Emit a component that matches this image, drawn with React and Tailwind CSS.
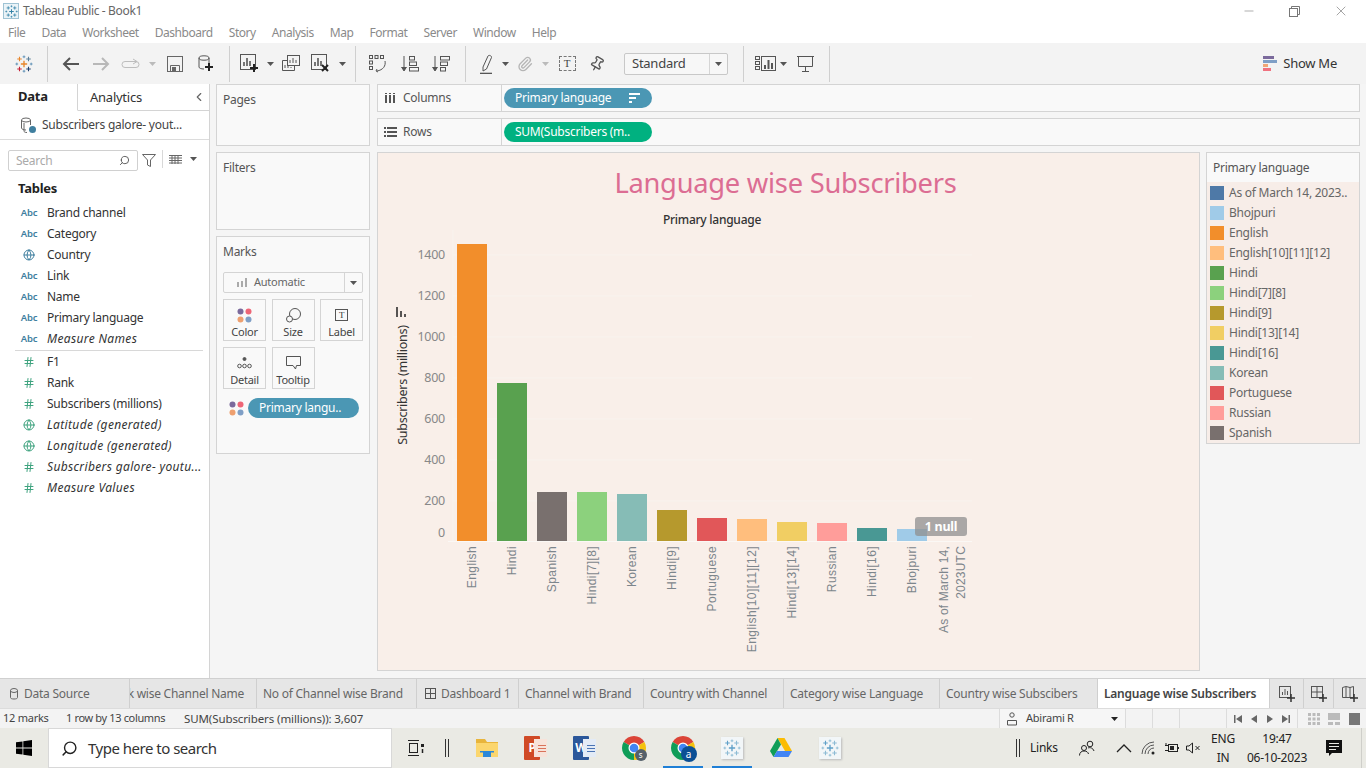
import {
  ChevronLeft,
  Globe,
  Hash,
  Minus,
  Paperclip,
  Pin,
  Search,
  X,
} from "lucide-react";

const menus = ["File", "Data", "Worksheet", "Dashboard", "Story", "Analysis", "Map", "Format", "Server", "Window", "Help"];

const dimensions = [
  ["abc", "Brand channel"],
  ["abc", "Category"],
  ["globe", "Country"],
  ["abc", "Link"],
  ["abc", "Name"],
  ["abc", "Primary language"],
  ["abc", "Measure Names", true],
];

const measures = [
  ["hash", "F1"],
  ["hash", "Rank"],
  ["hash", "Subscribers (millions)"],
  ["greenglobe", "Latitude (generated)", true],
  ["greenglobe", "Longitude (generated)", true],
  ["hash", "Subscribers galore- youtu...", true],
  ["hash", "Measure Values", true],
];

const bars = [
  { name: "English", top: 244, color: "#f28e2b" },
  { name: "Hindi", top: 383, color: "#59a14f" },
  { name: "Spanish", top: 492, color: "#79706e" },
  { name: "Hindi[7][8]", top: 492, color: "#8cd17d" },
  { name: "Korean", top: 494, color: "#86bcb6" },
  { name: "Hindi[9]", top: 510, color: "#b6992d" },
  { name: "Portuguese", top: 518, color: "#e15759" },
  { name: "English[10][11][12]", top: 519, color: "#ffbe7d" },
  { name: "Hindi[13][14]", top: 522, color: "#f1ce63" },
  { name: "Russian", top: 523, color: "#ff9d9a" },
  { name: "Hindi[16]", top: 528, color: "#499894" },
  { name: "Bhojpuri", top: 529, color: "#a0cbe8" },
];

const yTicks = [
  ["1400", 255],
  ["1200", 296],
  ["1000", 337],
  ["800", 378],
  ["600", 419],
  ["400", 460],
  ["200", 501],
  ["0", 533],
];

const legend = [
  ["As of March 14, 2023..", "#4e79a7"],
  ["Bhojpuri", "#a0cbe8"],
  ["English", "#f28e2b"],
  ["English[10][11][12]", "#ffbe7d"],
  ["Hindi", "#59a14f"],
  ["Hindi[7][8]", "#8cd17d"],
  ["Hindi[9]", "#b6992d"],
  ["Hindi[13][14]", "#f1ce63"],
  ["Hindi[16]", "#499894"],
  ["Korean", "#86bcb6"],
  ["Portuguese", "#e15759"],
  ["Russian", "#ff9d9a"],
  ["Spanish", "#79706e"],
];

const tabs = [
  { label: "No of Channel wise Brand", w: "w-[160px]" },
  { label: "Dashboard 1", w: "w-[102px]", grid: true },
  { label: "Channel with Brand", w: "w-[125px]" },
  { label: "Country with Channel", w: "w-[140px]" },
  { label: "Category wise Language", w: "w-[156px]" },
  { label: "Country wise Subscibers", w: "w-[158px]" },
];

// small cross used by the tableau logos
const Cross = ({ x, y, r, color, w = 1 }) => (
  <path d={`M${x - r} ${y}H${x + r}M${x} ${y - r}V${y + r}`} stroke={color} strokeWidth={w} fill="none" />
);

const TableauMark = ({ size = 20, colors }) => {
  const [center, small, topRight, bottomLeft, bottomRight] = colors;
  return (
    <svg width={size} height={size} viewBox="0 0 20 20">
      <Cross x={10} y={10} r={3.5} color={center} w={1.5} />
      <Cross x={10} y={2} r={1.5} color={small} />
      <Cross x={10} y={18} r={1.5} color={small} />
      <Cross x={2} y={10} r={1.5} color={small} />
      <Cross x={18} y={10} r={1.5} color={small} />
      <Cross x={5} y={4.500} r={2.500} color={center} w={1.200} />
      <Cross x={15} y={4.500} r={2.500} color={topRight} w={1.200} />
      <Cross x={5} y={15.500} r={2.500} color={bottomLeft} w={1.200} />
      <Cross x={15} y={15.500} r={2.500} color={bottomRight} w={1.200} />
    </svg>
  );
};

const logoColors = ["#e8862c", "#5b8fb5", "#5c7f99", "#c72037", "#1f3f6e"];
const tileColors = ["#5fa0c8", "#8dbbd4", "#8dbbd4", "#8dbbd4", "#8dbbd4"];
const titleColors = ["#2f7fa5", "#2f7fa5", "#2f7fa5", "#2f7fa5", "#2f7fa5"];

const Caret = ({ color = "#555" }) => (
  <svg width="7" height="4" viewBox="0 0 7 4">
    <path d="M0 0H7L3.5 4Z" fill={color} />
  </svg>
);

const Plus = ({ x, y }) => <path d={`M${x - 4} ${y}H${x + 4}M${x} ${y - 4}V${y + 4}`} stroke="#222" strokeWidth="2" />;

const Sep = () => <div className="h-[36px] w-px bg-[#cfcfcf]" />;

const ToolBox = ({ w, children }) => <div className={`flex h-full items-center justify-center ${w}`}>{children}</div>;

const Toolbar = () => (
  <div className="flex h-[41px] items-center bg-[#f3f3f3]">
    <ToolBox w="w-[47px]">
      <TableauMark size={18} colors={logoColors} />
    </ToolBox>
    <Sep />
    <div className="flex h-full items-center pl-[7px]">
      <ToolBox w="w-[31px]">
        <svg width="17" height="14" viewBox="0 0 17 14" fill="none" stroke="#555" strokeWidth="2">
          <path d="M17 7H2M8 1L2 7l6 6" />
        </svg>
      </ToolBox>
      <ToolBox w="w-[31px]">
        <svg width="17" height="14" viewBox="0 0 17 14" fill="none" stroke="#b8b8b8" strokeWidth="2">
          <path d="M0 7H15M9 1l6 6-6 6" />
        </svg>
      </ToolBox>
      <ToolBox w="w-[28px]">
        <svg width="20" height="12" viewBox="0 0 20 12" fill="none" stroke="#bdbdbd">
          <rect x="1" y="3.5" width="17" height="6" rx="3" />
          <path d="M12 1l4 2.5-4 2.5" />
        </svg>
      </ToolBox>
      <ToolBox w="w-[14px]">
        <Caret color="#bbb" />
      </ToolBox>
      <ToolBox w="w-[31px]">
        <svg width="16" height="16" viewBox="0 0 16 16" fill="none" stroke="#666">
          <rect x="0.5" y="0.5" width="15" height="15" />
          <path d="M3.500 15.500V9.500H12.500V15.500" />
          <rect x="5" y="11" width="4" height="4" fill="#666" stroke="none" />
        </svg>
      </ToolBox>
      <ToolBox w="w-[31px]">
        <svg width="16" height="17" viewBox="0 0 16 17" fill="none" stroke="#555">
          <ellipse cx="6" cy="3" rx="5" ry="2.2" />
          <path d="M1 3v9c0 1.2 2 2 5 2M11 3v6" />
          <Plus x={11} y={12} />
        </svg>
      </ToolBox>
    </div>
    <div className="ml-[8px]">
      <Sep />
    </div>
    <div className="flex h-full items-center pl-[6px]">
      <ToolBox w="w-[28px]">
        <svg width="20" height="19" viewBox="0 0 20 19" fill="none">
          <rect x="0.5" y="0.5" width="15" height="15" stroke="#555" />
          <path d="M4 12V8M7 12V4M10 12V7" stroke="#555" strokeWidth="1.6" />
          <Plus x={14} y={14} />
        </svg>
      </ToolBox>
      <ToolBox w="w-[12px]">
        <Caret />
      </ToolBox>
      <ToolBox w="w-[30px]">
        <svg width="18" height="17" viewBox="0 0 18 17" fill="none" stroke="#555">
          <rect x="5.5" y="0.5" width="12" height="10" fill="#f3f3f3" />
          <path d="M8 8V5M11 8V3M14 8V5" />
          <path d="M5.5 5.5H0.5V15.5H12.5V10.5M3 13v-3M6 13v-2M9 13v-1" />
        </svg>
      </ToolBox>
      <ToolBox w="w-[30px]">
        <svg width="20" height="19" viewBox="0 0 20 19" fill="none">
          <rect x="0.5" y="0.5" width="15" height="15" stroke="#555" />
          <path d="M4 12V8M7 12V4M10 12V7" stroke="#555" strokeWidth="1.6" />
          <path d="M11 11l6 6M17 11l-6 6" stroke="#222" strokeWidth="2" />
        </svg>
      </ToolBox>
      <ToolBox w="w-[12px]">
        <Caret />
      </ToolBox>
    </div>
    <div className="ml-[7px]">
      <Sep />
    </div>
    <div className="flex h-full items-center pl-[6px]">
      <ToolBox w="w-[32px]">
        <svg width="18" height="18" viewBox="0 0 18 18" fill="none" stroke="#555">
          <rect x="0.5" y="0.5" width="3" height="3" />
          <rect x="6" y="0.5" width="3" height="3" />
          <rect x="11.5" y="0.5" width="3" height="3" />
          <rect x="0.5" y="6" width="3" height="3" />
          <rect x="0.5" y="11.5" width="3" height="3" />
          <path d="M16 6c1 5-2 9-8 10M8 14l-1 2 2 1" />
        </svg>
      </ToolBox>
      <ToolBox w="w-[32px]">
        <svg width="18" height="16" viewBox="0 0 18 16" fill="none" stroke="#555">
          <path d="M3 0v14M0.5 11L3 15l2.5-4" fill="#555" />
          <rect x="8.5" y="0.5" width="5" height="3.5" />
          <rect x="8.5" y="6" width="7" height="3.5" />
          <rect x="8.5" y="11.5" width="9" height="3.5" />
        </svg>
      </ToolBox>
      <ToolBox w="w-[30px]">
        <svg width="18" height="16" viewBox="0 0 18 16" fill="none" stroke="#555">
          <path d="M3 0v14M0.5 11L3 15l2.5-4" fill="#555" />
          <rect x="8.5" y="0.5" width="9" height="3.5" />
          <rect x="8.5" y="6" width="7" height="3.5" />
          <rect x="8.5" y="11.5" width="5" height="3.5" />
        </svg>
      </ToolBox>
    </div>
    <div className="ml-[9px]">
      <Sep />
    </div>
    <div className="flex h-full items-center pl-[7px]">
      <ToolBox w="w-[28px]">
        <svg width="14" height="20" viewBox="0 0 14 20" fill="none" stroke="#555">
          <path d="M3 13L8 2c1-1.500 4 0 3.500 1.500L6.500 15 3 17z" />
          <path d="M0 19.500H12" strokeWidth="1.600" />
        </svg>
      </ToolBox>
      <ToolBox w="w-[8px]">
        <Caret />
      </ToolBox>
      <ToolBox w="w-[32px]">
        <Paperclip size={16} color="#b5b5b5" />
      </ToolBox>
      <ToolBox w="w-[8px]">
        <Caret color="#bbb" />
      </ToolBox>
      <div className="w-[3px]" />
      <ToolBox w="w-[30px]">
        <div className="flex h-[15px] w-[17px] items-center justify-center border border-dashed border-[#777] font-['Liberation_Serif',serif] text-[11px] leading-none text-[#444]">
          T
        </div>
      </ToolBox>
      <ToolBox w="w-[30px]">
        <Pin size={16} color="#555" className="rotate-[30deg]" />
      </ToolBox>
    </div>
    <div className="ml-[12px] flex h-[22px] w-[104px] items-center rounded-[2px] border border-[#c8c8c8] bg-[#f7f7f7]">
      <span className="flex-1 pl-[7px] text-[13px] text-[#444]">Standard</span>
      <span className="flex h-full w-[18px] items-center justify-center border-l border-[#d5d5d5]">
        <Caret />
      </span>
    </div>
    <div className="ml-[15px]">
      <Sep />
    </div>
    <div className="flex h-full items-center pl-[7px]">
      <ToolBox w="w-[28px]">
        <svg width="21" height="15" viewBox="0 0 21 15" fill="none" stroke="#555">
          <rect x="0.500" y="0.500" width="4" height="3" />
          <rect x="0.500" y="5.500" width="4" height="3" />
          <rect x="0.500" y="10.500" width="4" height="3" />
          <rect x="6.500" y="0.500" width="14" height="14" />
          <path d="M10 13V9M13.500 13V4M17 13V7" strokeWidth="2" />
        </svg>
      </ToolBox>
      <ToolBox w="w-[8px]">
        <Caret />
      </ToolBox>
      <div className="w-[3px]" />
      <ToolBox w="w-[30px]">
        <svg width="17" height="16" viewBox="0 0 17 16" fill="none" stroke="#555">
          <path d="M0 0.500H17M1.500 1V10.500H15.500V1M8.500 11V15M5 15.500H12" />
        </svg>
      </ToolBox>
    </div>
    <div className="ml-[9px]">
      <Sep />
    </div>
    <div className="ml-auto flex items-center gap-[6px] pr-[29px]">
      <svg width="14" height="15" viewBox="0 0 14 15">
        <rect x="0" y="0" width="11" height="3" fill="#7b6a9c" />
        <rect x="0" y="4" width="14" height="3" fill="#7f9fc6" />
        <rect x="0" y="8" width="5" height="3" fill="#f0a676" />
        <rect x="0" y="12" width="8" height="3" fill="#f0727f" />
      </svg>
      <span className="text-[13px] text-[#333]">Show Me</span>
    </div>
  </div>
);

const FieldIcon = ({ type }) => {
  if (type === "abc") return <span className="text-[9.5px] font-semibold leading-none text-[#3f7f9f]">Abc</span>;
  if (type === "globe") return <Globe size={12} color="#3f7f9f" />;
  if (type === "greenglobe") return <Globe size={12} color="#3fa37f" />;
  return <Hash size={12} color="#3fa37f" />;
};

const FieldRow = ({ field }) => (
  <div className="flex h-[21px] items-center">
    <div className="flex w-[47px] justify-center pl-[14px] pr-[3px]">
      <FieldIcon type={field[0]} />
    </div>
    <span className={`whitespace-nowrap text-[12px] text-[#333] ${field[2] ? "italic tracking-[0.35px]" : ""}`}>{field[1]}</span>
  </div>
);

const DataPane = () => (
  <div className="w-[210px] shrink-0 border-r border-[#d4d4d4] bg-white">
    <div className="flex h-[27px] items-center border-b border-[#d4d4d4]">
      <div className="flex h-[27px] w-[78px] items-center border-r border-b border-[#d4d4d4] border-b-white pl-[18px] pt-[1px] text-[13px] font-bold text-[#222]">
        Data
      </div>
      <span className="flex-1 pl-[12px] pt-[1px] text-[13px] text-[#333]">Analytics</span>
      <ChevronLeft size={14} color="#666" className="mr-[3px]" />
    </div>
    <div className="flex h-[29px] items-center gap-[5px] border-b border-[#dcdcdc] pl-[20px]">
      <svg width="17" height="17" viewBox="0 0 17 17" fill="none" stroke="#666">
        <ellipse cx="6" cy="3" rx="4.500" ry="2" />
        <path d="M1.500 3v8c0 1 2 2 4.500 2M10.500 3v5M4 6v8c0 1 1 1.500 3 1.500" />
        <circle cx="12.500" cy="12.500" r="3.500" fill="#3f7f9f" stroke="none" />
      </svg>
      <span className="whitespace-nowrap text-[12px] text-[#444]">Subscribers galore- yout...</span>
    </div>
    <div className="flex h-[37px] items-start pt-[10px]">
      <div className="ml-[8px] flex h-[21px] w-[130px] items-center justify-between rounded-[2px] border border-[#d0d0d0] px-[7px]">
        <span className="text-[12px] text-[#aaa]">Search</span>
        <Search size={11} color="#555" className="-scale-x-100" />
      </div>
      <svg width="14" height="13" viewBox="0 0 14 13" fill="none" stroke="#666" className="ml-[4px] mt-[4px]">
        <path d="M0.500 0.500H13.500L8.500 6V12.500L5.500 11V6Z" />
      </svg>
      <div className="ml-[6px] h-[18px] w-px bg-[#d8d8d8]" />
      <svg width="13" height="9" viewBox="0 0 13 9" className="ml-[6px] mt-[5px]" fill="none" stroke="#666">
        <path d="M0 0.500H13M0 3H13M0 5.500H13M0 8H13M3 0V9M6 0V9M9 0V9" />
      </svg>
      <div className="ml-[8px] mt-[7px]">
        <Caret />
      </div>
    </div>
    <div className="flex h-[23px] items-center pl-[18px] text-[13px] font-bold text-[#222]">Tables</div>
    <div className="pt-[2px]">
      {dimensions.map((f) => (
        <FieldRow key={f[1]} field={f} />
      ))}
    </div>
    <div className="ml-[15px] mr-[6px] mt-[1px] h-px bg-[#d8d8d8]" />
    <div>
      {measures.map((f) => (
        <FieldRow key={f[1]} field={f} />
      ))}
    </div>
  </div>
);

const MarkButton = ({ label, children }) => (
  <div className="flex h-[42px] w-[43px] flex-col items-center border border-[#d4d4d4] pt-[6px]">
    <div className="flex h-[18px] items-center">{children}</div>
    <span className="whitespace-nowrap text-[11px] leading-[15px] text-[#444]">{label}</span>
  </div>
);

const Dots = () => (
  <svg width="15" height="15" viewBox="0 0 15 15">
    <circle cx="3.500" cy="3.500" r="3" fill="#7b6a9c" />
    <circle cx="11.500" cy="3.500" r="3" fill="#ee6677" />
    <circle cx="3.500" cy="11.500" r="3" fill="#eea070" />
    <circle cx="11.500" cy="11.500" r="3" fill="#7f9fc6" />
  </svg>
);

const ShelfColumn = () => (
  <div className="flex w-[154px] shrink-0 flex-col gap-[6px]">
    <div className="h-[62px] border border-[#d4d4d4] bg-[#f9f9f9] pl-[6px] pt-[6px] text-[12px] text-[#555]">Pages</div>
    <div className="h-[78px] border border-[#d4d4d4] bg-[#f9f9f9] pl-[6px] pt-[6px] text-[12px] text-[#555]">Filters</div>
    <div className="h-[218px] border border-[#d4d4d4] bg-[#f9f9f9] px-[6px] pt-[6px]">
      <div className="text-[12px] leading-[17px] text-[#555]">Marks</div>
      <div className="mt-[12px] flex h-[21px] w-[140px] items-center rounded-[2px] border border-[#d4d4d4]">
        <svg width="11" height="9" viewBox="0 0 11 9" className="ml-[12px]">
          <path d="M1 9V4h2v5zM5 9V3h2v6zM9 9V0h2v9z" fill="#aaa" />
        </svg>
        <span className="ml-[7px] flex-1 text-[11px] text-[#666]">Automatic</span>
        <span className="flex h-full w-[18px] items-center justify-center border-l border-[#d5d5d5]">
          <Caret />
        </span>
      </div>
      <div className="mt-[6px] grid w-[140px] grid-cols-[43px_43px_43px] justify-between gap-y-[6px]">
        <MarkButton label="Color">
          <Dots />
        </MarkButton>
        <MarkButton label="Size">
          <svg width="15" height="15" viewBox="0 0 15 15" fill="none" stroke="#555">
            <circle cx="9" cy="6" r="5.500" />
            <circle cx="3.500" cy="11" r="3" fill="#f9f9f9" />
          </svg>
        </MarkButton>
        <MarkButton label="Label">
          <div className="flex h-[12px] w-[13px] items-center justify-center border border-[#555] font-['Liberation_Serif',serif] text-[9px] leading-none text-[#333]">
            T
          </div>
        </MarkButton>
        <MarkButton label="Detail">
          <svg width="15" height="12" viewBox="0 0 15 12" fill="none" stroke="#555">
            <circle cx="7.500" cy="2" r="1.500" fill="#555" />
            <circle cx="2.500" cy="9" r="1.800" />
            <circle cx="7.500" cy="9" r="1.800" />
            <circle cx="12.500" cy="9" r="1.800" />
          </svg>
        </MarkButton>
        <MarkButton label="Tooltip">
          <svg width="15" height="14" viewBox="0 0 15 14" fill="none" stroke="#555">
            <path d="M0.500 0.500H14.500V9.500H10.500L9.500 13 7 9.500H0.500Z" />
          </svg>
        </MarkButton>
      </div>
      <div className="mt-[9px] flex items-center gap-[4px] pl-[6px]">
        <Dots />
        <div className="flex h-[20px] w-[111px] items-center rounded-full bg-[#4b97b4] pl-[11px] text-[12px] text-white">
          Primary langu..
        </div>
      </div>
    </div>
  </div>
);

const ShelfRow = ({ icon, label, pill, color, sorted }) => (
  <div className="flex h-[28px] items-center border border-[#d4d4d4] bg-[#f9f9f9]">
    <div className="flex h-full w-[124px] items-center gap-[6px] border-r border-[#d4d4d4] pl-[6px] text-[12px] text-[#555]">
      <span className="flex w-[13px] justify-center">{icon}</span>
      {label}
    </div>
    <div
      className={`ml-[2px] flex h-[20px] w-[148px] items-center justify-between rounded-full pl-[11px] pr-[12px] text-[12px] text-white ${color}`}
    >
      <span className="whitespace-nowrap">{pill}</span>
      {sorted && (
        <svg width="11" height="10" viewBox="0 0 11 10" fill="#fff">
          <rect width="11" height="2" />
          <rect y="4" width="7" height="2" />
          <rect y="8" width="3" height="2" />
        </svg>
      )}
    </div>
  </div>
);

const Chart = () => (
  <svg viewBox="378 212 820 457" width="820" height="457" className="block">
    <text x="712" y="224" textAnchor="middle" fontSize="12" fontWeight="500" fill="#333">
      Primary language
    </text>
    {[255, 296, 337, 378, 419, 460, 501].map((y) => (
      <path key={y} d={`M453 ${y}H972`} stroke="#f8f3ee" />
    ))}
    <path d="M453 230V541" stroke="#f8f3ee" />
    <path d="M448 541.500H972" stroke="#fbf8f5" />
    {yTicks.map(([label, y]) => (
      <text key={label} x="445" y={y + 4} textAnchor="end" fontSize="12.500" fill="#888">
        {label}
      </text>
    ))}
    <text
      x="402"
      y="385"
      textAnchor="middle"
      dominantBaseline="central"
      fontSize="12.500"
      fill="#333"
      transform="rotate(-90 402 385)"
    >
      Subscribers (millions)
    </text>
    <path d="M397 307V317M401 311V317M405 314V317" stroke="#222" strokeWidth="1.500" />
    {bars.map((b, i) => {
      const x = 457 + i * 40;
      return (
        <g key={b.name}>
          <rect x={x} y={b.top} width="30" height={541 - b.top} fill={b.color} />
          <text
            x={x + 15}
            y="546"
            textAnchor="end"
            dominantBaseline="central"
            fontSize="12"
            fontFamily="Liberation Sans"
            letterSpacing="0.4"
            fill="#7d868c"
            transform={`rotate(-90 ${x + 15} 546)`}
          >
            {b.name}
          </text>
        </g>
      );
    })}
    <g fontSize="12" fontFamily="Liberation Sans" letterSpacing="0.2" fill="#7d868c">
      <text x="944" y="546" textAnchor="end" dominantBaseline="central" transform="rotate(-90 944 546)">
        As of March 14,
      </text>
      <text x="961" y="546" textAnchor="end" dominantBaseline="central" transform="rotate(-90 961 546)">
        2023UTC
      </text>
    </g>
    <rect x="915" y="517" width="52" height="19" rx="3" fill="#8f8f8f" fillOpacity="0.75" />
    <text x="941" y="531" textAnchor="middle" fontSize="12.500" fontWeight="700" fill="#fff">
      1 null
    </text>
  </svg>
);

const Workspace = () => (
  <div className="flex min-w-0 flex-1 flex-col gap-[6px]">
    <ShelfRow
      label="Columns"
      pill="Primary language"
      color="bg-[#4b97b4]"
      sorted
      icon={
        <svg width="11" height="10" viewBox="0 0 11 10" fill="#555">
          <rect y="2" width="2" height="8" />
          <rect x="4" y="2" width="2" height="8" />
          <rect x="8" y="2" width="2" height="8" />
          <rect width="2" height="1" />
          <rect x="4" width="2" height="1" />
          <rect x="8" width="2" height="1" />
        </svg>
      }
    />
    <ShelfRow
      label="Rows"
      pill="SUM(Subscribers (m.."
      color="bg-[#00b180]"
      icon={
        <svg width="13" height="10" viewBox="0 0 13 10" fill="#555">
          <rect width="2" height="2" />
          <rect x="3" width="10" height="2" />
          <rect y="4" width="2" height="2" />
          <rect x="3" y="4" width="10" height="2" />
          <rect y="8" width="2" height="2" />
          <rect x="3" y="8" width="10" height="2" />
        </svg>
      }
    />
    <div className="flex gap-[6px]">
      <div className="h-[519px] w-[823px] border border-[#d4d4d4] bg-[#f9efe9]">
        <div className="flex h-[59px] items-center justify-center pr-[6px] text-[27.3px] leading-none text-[#dc6d93]">
          Language wise Subscribers
        </div>
        <Chart />
      </div>
      <div className="h-[292px] w-[154px] border border-[#d4d4d4] bg-[#f7ede8]">
        <div className="flex h-[29px] items-center bg-[#f9f9f9] pl-[6px] text-[12px] text-[#555]">Primary language</div>
        <div className="pl-[3px] pt-[1px]">
          {legend.map(([name, color]) => (
            <div key={name} className="flex h-[20px] items-center gap-[5px]">
              <span className="h-[14px] w-[14px] shrink-0" style={{ backgroundColor: color }} />
              <span className="whitespace-nowrap text-[12px] text-[#666]">{name}</span>
            </div>
          ))}
        </div>
      </div>
    </div>
  </div>
);

const Tab = ({ w, children }) => (
  <div className={`flex h-full shrink-0 items-center border-r border-[#cfcfcf] ${w}`}>{children}</div>
);

const TabBar = () => (
  <div className="flex h-[30px] border-t border-[#d0d0d0] bg-[#e6e6e6] text-[12px] text-[#666]">
    <Tab w="w-[130px]">
      <svg width="10" height="12" viewBox="0 0 10 12" fill="none" stroke="#666" className="ml-[9px] mr-[5px]">
        <ellipse cx="5" cy="2.500" rx="3.500" ry="2" />
        <path d="M1.500 2.500V9.500c0 1 1.500 1.500 3.500 1.500s3.500-.5 3.500-1.500V2.500" />
      </svg>
      Data Source
    </Tab>
    <Tab w="w-[127px]">
      <div className="flex w-full justify-end overflow-hidden pr-[12px]">
        <span className="whitespace-nowrap">Rank wise Channel Name</span>
      </div>
    </Tab>
    {tabs.map((t) => (
      <Tab key={t.label} w={t.w}>
        <div className={`flex w-full items-center gap-[5px] whitespace-nowrap ${t.grid ? "pl-[8px]" : "pl-[6px]"}`}>
          {t.grid && (
            <svg width="11" height="11" viewBox="0 0 11 11" fill="none" stroke="#555">
              <rect x="0.500" y="0.500" width="10" height="10" />
              <path d="M5.500 0V11M0 5.500H11" />
            </svg>
          )}
          {t.label}
        </div>
      </Tab>
    ))}
    <div className="flex h-full w-[171px] shrink-0 items-center bg-white pl-[6px] font-semibold text-[#444]">
      Language wise Subscribers
    </div>
    <div className="flex h-full w-[35px] items-center justify-center border-x border-[#cfcfcf]">
      <svg width="16" height="16" viewBox="0 0 16 16" fill="none" stroke="#555">
        <rect x="0.500" y="0.500" width="11" height="11" />
        <path d="M3.500 9V6M6 9V3M8.500 9V5" />
        <path d="M12 8V16M8 12H16" stroke="#333" strokeWidth="1.500" />
      </svg>
    </div>
    <div className="flex h-full w-[30px] items-center justify-center border-r border-[#cfcfcf]">
      <svg width="16" height="16" viewBox="0 0 16 16" fill="none" stroke="#555">
        <rect x="0.500" y="0.500" width="11" height="11" />
        <path d="M6 0V12M0 6H12" />
        <path d="M12 8V16M8 12H16" stroke="#333" strokeWidth="1.500" />
      </svg>
    </div>
    <div className="flex h-full flex-1 items-center justify-center">
      <svg width="16" height="16" viewBox="0 0 16 16" fill="none" stroke="#555">
        <path d="M0.500 1.500L4 0.500 8 1.500 11.500 0.500V11.500H0.500ZM4 1V11M8 1V11" />
        <path d="M12 8V16M8 12H16" stroke="#333" strokeWidth="1.500" />
      </svg>
    </div>
  </div>
);

const NavButton = ({ d }) => (
  <div className="flex w-[16px] justify-center">
    <svg width="8" height="8" viewBox="0 0 8 8" fill="#666">
      <path d={d} />
    </svg>
  </div>
);

const StatusBar = () => (
  <div className="flex h-[20px] items-center border-t border-[#dcdcdc] bg-[#f3f3f3] text-[11px] text-[#444]">
    <span className="w-[66px] pl-[3px]">12 marks</span>
    <span className="w-[118px] tracking-[-0.35px]">1 row by 13 columns</span>
    <span className="w-[815px] text-[11.5px] tracking-[-0.1px]">SUM(Subscribers (millions)): 3,607</span>
    <div className="flex h-full w-[127px] items-center border-x border-[#dcdcdc] bg-[#f6f6f6]">
      <svg width="10" height="14" viewBox="0 0 10 14" fill="none" stroke="#555" className="ml-[7px] mr-[9px]">
        <circle cx="5" cy="3" r="2.200" />
        <path d="M0.500 13V8.500H9.500V13Z" />
      </svg>
      <span className="flex-1">Abirami R</span>
      <span className="mr-[7px] flex">
        <Caret color="#222" />
      </span>
    </div>
    <div className="h-full w-[27px] border-r border-[#dcdcdc]" />
    <div className="h-full w-[27px] border-r border-[#dcdcdc]" />
    <div className="h-full w-[47px] border-r border-[#dcdcdc]" />
    <div className="flex h-full w-[71px] items-center justify-center border-r border-[#dcdcdc]">
      <NavButton d="M0 0h1.500v8H0zM8 0v8L2 4z" />
      <NavButton d="M7 0v8L1 4z" />
      <NavButton d="M1 0v8l6-4z" />
      <NavButton d="M8 0H6.500v8H8zM0 0v8l6-4z" />
    </div>
    <div className="flex flex-1 items-center justify-around pl-[6px] pr-[2px]">
      <svg width="12" height="12" viewBox="0 0 12 12" fill="#bbb">
        <path d="M0 0h3v3H0zM4.500 0h3v3h-3zM9 0h3v3H9zM0 4.500h3v3H0zM4.500 4.500h3v3h-3zM9 4.500h3v3H9zM0 9h3v3H0zM4.500 9h3v3h-3zM9 9h3v3H9z" />
      </svg>
      <svg width="12" height="12" viewBox="0 0 12 12" fill="#bbb">
        <path d="M0 0h12v7H0zM0 9h5v3H0zM7 9h5v3H7z" />
      </svg>
      <div className="h-[12px] w-[11px] bg-[#777]" />
    </div>
  </div>
);

const Chrome = ({ badge, badgeSize }) => (
  <div className="relative h-[24px] w-[24px]">
    <svg width="24" height="24" viewBox="0 0 24 24">
      <path d="M12 12L1.610 6A12 12 0 0 1 22.390 6Z" fill="#db4437" />
      <path d="M12 12L22.390 6A12 12 0 0 1 12 24Z" fill="#f4c20d" />
      <path d="M12 12L12 24A12 12 0 0 1 1.610 6Z" fill="#0f9d58" />
      <circle cx="12" cy="12" r="5.500" fill="#fff" />
      <circle cx="12" cy="12" r="4.300" fill="#4285f4" />
    </svg>
    <div
      className={`absolute flex items-center justify-center rounded-full leading-none text-white ${badgeSize}`}
    >
      {badge}
    </div>
  </div>
);

const TaskTableau = () => (
  <div className="flex h-[22px] w-[22px] items-center justify-center bg-[#f2f6f8] shadow-[1px_1px_2px_#bbb]">
    <TableauMark size={18} colors={tileColors} />
  </div>
);

const OfficeIcon = ({ letter, main, paper, line }) => (
  <div className="relative h-[24px] w-[23px]">
    <div className={`absolute right-0 top-[3px] flex h-[18px] w-[13px] flex-col justify-center gap-[2px] pl-[4px] pr-[1px] ${paper}`}>
      <div className={`h-[1px] ${line}`} />
      <div className={`h-[1px] ${line}`} />
      <div className={`h-[1px] ${line}`} />
    </div>
    <div className={`flex h-[24px] w-[16px] items-center justify-center rounded-[1px] text-[12px] font-bold leading-none text-white ${main}`}>
      {letter}
    </div>
  </div>
);

const TaskSlot = ({ w, children }) => <div className={`flex h-full items-center justify-center ${w}`}>{children}</div>;

const Taskbar = () => (
  <div className="flex h-[40px] items-center bg-[#eaeae4] text-black">
    <TaskSlot w="w-[48px]">
      <svg width="16" height="16" viewBox="0 0 16 16" fill="#000">
        <path d="M0 2.300L6.500 1.400V7.600H0zM7.300 1.300L16 0V7.600H7.300zM0 8.400H6.500V14.600L0 13.700zM7.300 8.400H16V16L7.300 14.700z" />
      </svg>
    </TaskSlot>
    <div className="flex h-full w-[344px] items-center border border-[#d8d8d8] bg-white pl-[12px]">
      <Search size={17} color="#222" className="-scale-x-100" />
      <span className="ml-[10px] text-[15px] tracking-[-0.5px] text-[#333]">Type here to search</span>
    </div>
    <TaskSlot w="w-[48px]">
      <svg width="16" height="16" viewBox="0 0 16 16" fill="none" stroke="#222">
        <path d="M0 0.500H11M0 15.500H11" />
        <rect x="1.500" y="3.500" width="8" height="9" />
        <rect x="13" y="4" width="3" height="3" fill="#222" stroke="none" />
        <path d="M14.500 9V13" strokeWidth="1.500" />
      </svg>
    </TaskSlot>
    <TaskSlot w="w-[14px]">
      <div className="h-[18px] w-[4px] border-x border-[#333]" />
    </TaskSlot>
    <div className="w-[8px]" />
    <TaskSlot w="w-[49px]">
      <svg width="22" height="20" viewBox="0 0 22 20">
        <path d="M0 1H9L11 4H22V19H0Z" fill="#e8b53c" />
        <rect y="5" width="22" height="14" fill="#fbd66e" />
        <path d="M4 13H18V14.500H15V19H7V14.500H4Z" fill="#2b88d8" />
      </svg>
    </TaskSlot>
    <TaskSlot w="w-[49px]">
      <OfficeIcon letter="P" main="bg-[#d04a26]" paper="bg-[#f7e3da]" line="bg-[#d9735a]" />
    </TaskSlot>
    <TaskSlot w="w-[49px]">
      <OfficeIcon letter="W" main="bg-[#2b579a]" paper="bg-[#e3ebf6]" line="bg-[#4a74b4]" />
    </TaskSlot>
    <TaskSlot w="w-[49px]">
      <Chrome badge="s" badgeSize="-bottom-[1px] -right-[1px] h-[12px] w-[12px] bg-[#55606a] text-[8px]" />
    </TaskSlot>
    <div className="relative h-full w-[49px]">
      <div className="flex h-full items-center justify-center">
        <Chrome badge="a" badgeSize="-bottom-[2px] -right-[2px] h-[16px] w-[16px] bg-[#0b4f94] text-[10px]" />
      </div>
      <div className="absolute bottom-0 left-[5px] h-[2px] w-[40px] bg-[#1f7fd6]" />
    </div>
    <div className="relative h-full w-[49px]">
      <div className="flex h-full items-center justify-center">
        <TaskTableau />
      </div>
      <div className="absolute bottom-0 left-[5px] h-[2px] w-[40px] bg-[#1f7fd6]" />
    </div>
    <TaskSlot w="w-[49px]">
      <svg width="22" height="20" viewBox="0 0 22 20">
        <path d="M7.500 0H14.500L22 13H15Z" fill="#fbbc04" />
        <path d="M7.500 0L0 13 3.500 19 11 6.500Z" fill="#0f9d58" />
        <path d="M3.500 19H18.500L22 13H7Z" fill="#4285f4" />
      </svg>
    </TaskSlot>
    <TaskSlot w="w-[49px]">
      <TaskTableau />
    </TaskSlot>
    <div className="ml-auto flex h-full items-center">
      <div className="h-[18px] w-[4px] border-x border-[#333]" />
      <span className="ml-[10px] w-[49px] text-[12px] text-[#222]">Links</span>
      <svg width="16" height="16" viewBox="0 0 16 16" fill="none" stroke="#222" className="mr-[21px]">
        <circle cx="11" cy="4" r="2.800" />
        <circle cx="5" cy="8" r="2.500" />
        <path d="M0.500 15.500c0-3 2-4.500 4.500-4.500s4 1 4.500 3M9 8c2-1 5 0 6 3" />
      </svg>
      <svg width="16" height="9" viewBox="0 0 16 9" fill="none" stroke="#222" strokeWidth="1.300" className="mr-[9px]">
        <path d="M1 8L8 1l7 7" />
      </svg>
      <svg width="14" height="14" viewBox="0 0 14 14" fill="none" stroke="#555" className="mr-[9px]">
        <path d="M1 13A12 12 0 0 1 13 1M4 13A9 9 0 0 1 13 4M7 13A6 6 0 0 1 13 7" />
        <circle cx="12" cy="12" r="1.500" fill="#222" stroke="none" />
      </svg>
      <svg width="15" height="12" viewBox="0 0 15 12" fill="none" stroke="#222" className="mr-[7px]">
        <rect x="4.500" y="2.500" width="9" height="7" />
        <rect x="6" y="4" width="4" height="4" fill="#222" stroke="none" />
        <path d="M14.500 5V7M1 3.500H4.500M1 8.500H4.500M2 1V3" />
      </svg>
      <svg width="15" height="12" viewBox="0 0 15 12" fill="none" stroke="#222" className="mr-[7px]">
        <path d="M0.500 4V8H3L6.500 11V1L3 4Z" />
        <path d="M9.500 4l4 4M13.500 4l-4 4" />
      </svg>
      <div className="flex w-[30px] flex-col items-center text-[12px] leading-[19px] text-[#222]">
        <span>ENG</span>
        <span>IN</span>
      </div>
      <div className="flex w-[78px] flex-col items-center text-[12px] leading-[19px] text-[#222]">
        <span>19:47</span>
        <span>06-10-2023</span>
      </div>
      <div className="ml-[10px] mr-[19px] flex w-[16px] justify-center">
        <svg width="16" height="17" viewBox="0 0 16 17">
          <path d="M0 0H16V13H6L3 16V13H0Z" fill="#111" />
          <path d="M3 3.500H13M3 6.500H13M3 9.500H10" stroke="#eaeae4" />
        </svg>
      </div>
      <div className="mr-[4px] h-full w-px bg-[#cfcfca]" />
    </div>
  </div>
);

export default function App() {
  return (
    <div className="flex h-[768px] w-[1366px] flex-col overflow-hidden bg-white font-['Noto_Sans',sans-serif] tracking-[-0.25px]">
      <div className="flex h-[22px] items-center">
        <div className="ml-[3px] flex h-[16px] w-[16px] items-center justify-center border border-[#9fc3d4] bg-[#eaf3f7]">
          <TableauMark size={13} colors={titleColors} />
        </div>
        <span className="ml-[4px] text-[12px] tracking-[-0.35px] text-[#666]">Tableau Public - Book1</span>
        <div className="ml-auto flex items-center text-[#777]">
          <Minus size={14} strokeWidth={1} className="mr-[33px]" />
          <svg width="11" height="11" viewBox="0 0 11 11" fill="none" stroke="#777" className="mr-[33px]">
            <rect x="0.500" y="2.500" width="8" height="8" />
            <path d="M2.500 2.500V0.500H10.500V8.500H8.500" />
          </svg>
          <X size={16} strokeWidth={1} className="mr-[17px]" />
        </div>
      </div>
      <div className="flex h-[21px] items-center gap-[16px] pl-[8px] text-[12px] tracking-[-0.45px] text-[#8a8a8a]">
        {menus.map((m) => (
          <span key={m}>{m}</span>
        ))}
      </div>
      <Toolbar />
      <div className="flex h-[594px] bg-[#f5f5f5]">
        <DataPane />
        <div className="flex min-w-0 flex-1 gap-[7px] pl-[6px] pr-[6px]">
          <ShelfColumn />
          <Workspace />
        </div>
      </div>
      <TabBar />
      <StatusBar />
      <Taskbar />
    </div>
  );
}
